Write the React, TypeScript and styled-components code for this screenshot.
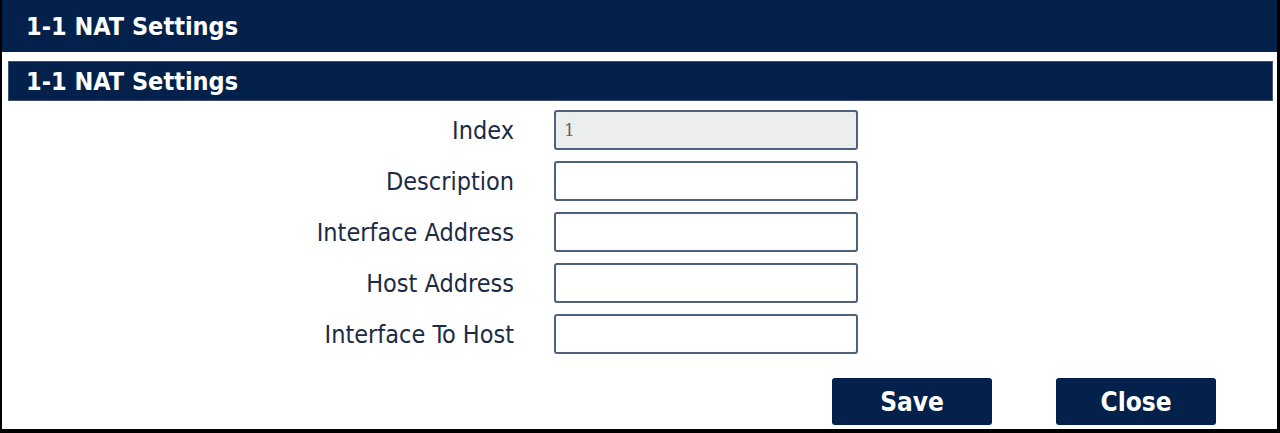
import React from 'react'
import styled, { createGlobalStyle } from 'styled-components'

const NAVY = '#03214a'
const INK = '#1b2b44'

const GlobalStyle = createGlobalStyle`
  html, body {
    margin: 0;
    padding: 0;
    background: #ffffff;
  }
  body {
    font-family: 'DejaVu Sans Condensed', 'DejaVu Sans', sans-serif;
  }
`

const Frame = styled.div`
  box-sizing: border-box;
  width: 1280px;
  height: 433px;
  border-left: 2px solid #000;
  border-right: 3px solid #000;
  border-bottom: 4px solid #000;
  background: #fff;
  display: flex;
  flex-direction: column;
`

const TopBar = styled.div`
  height: 52px;
  background: ${NAVY};
  color: #fff;
  display: flex;
  align-items: center;
  padding-left: 24px;
  font-weight: 700;
  font-size: 25px;
`

const Panel = styled.section`
  display: flex;
  flex-direction: column;
  padding: 9px 4px 0 6px;
`

const PanelTitle = styled.div`
  box-sizing: border-box;
  height: 40px;
  background: ${NAVY};
  border: 1px solid #3c5270;
  color: #fff;
  display: flex;
  align-items: center;
  padding-left: 17px;
  font-weight: 700;
  font-size: 25px;
`

const Form = styled.div`
  display: grid;
  grid-template-columns: 506px 304px;
  column-gap: 40px;
  row-gap: 11px;
  margin-top: 9px;
`

const Label = styled.label`
  text-align: right;
  align-self: center;
  font-size: 25px;
  color: ${INK};
`

const Field = styled.input<{ $readOnly?: boolean }>`
  box-sizing: border-box;
  height: 40px;
  width: 304px;
  border: 2px solid #4b617c;
  border-radius: 3px;
  background: ${({ $readOnly }) => ($readOnly ? '#eceeee' : '#fff')};
  padding: 0 8px;
  font-family: 'DejaVu Serif', serif;
  font-size: 17px;
  color: #6f6150;
  outline: none;
`

const Actions = styled.div`
  display: flex;
  justify-content: flex-end;
  gap: 64px;
  margin-top: 24px;
  padding-right: 57px;
`

const Button = styled.button`
  width: 160px;
  height: 47px;
  border: none;
  border-radius: 3px;
  background: ${NAVY};
  color: #fff;
  font-family: 'DejaVu Sans Condensed', 'DejaVu Sans', sans-serif;
  font-weight: 700;
  font-size: 26px;
  cursor: pointer;
`

const fields = [
  { label: 'Index', value: '1', readOnly: true },
  { label: 'Description', value: '' },
  { label: 'Interface Address', value: '' },
  { label: 'Host Address', value: '' },
  { label: 'Interface To Host', value: '' },
]

const App = () => {
  return (
    <>
      <GlobalStyle />
      <Frame>
        <TopBar>1-1 NAT Settings</TopBar>
        <Panel>
          <PanelTitle>1-1 NAT Settings</PanelTitle>
          <Form>
            {fields.map((f) => (
              <React.Fragment key={f.label}>
                <Label>{f.label}</Label>
                <Field
                  $readOnly={f.readOnly}
                  readOnly={f.readOnly}
                  defaultValue={f.value}
                />
              </React.Fragment>
            ))}
          </Form>
          <Actions>
            <Button>Save</Button>
            <Button>Close</Button>
          </Actions>
        </Panel>
      </Frame>
    </>
  )
}

export default App
